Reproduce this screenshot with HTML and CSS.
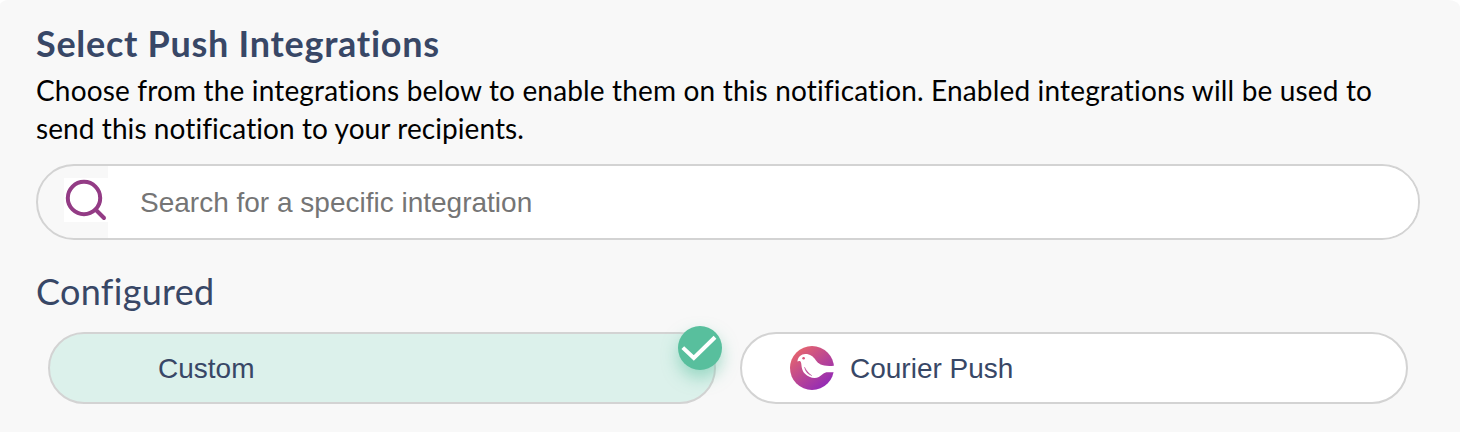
FILE: index.html
```html
<!DOCTYPE html>
<html lang="en">
<head>
<meta charset="utf-8">
<title>Push Integrations</title>
<link rel="stylesheet" href="styles.css">
</head>
<body>
<main class="panel">
  <h1 class="title">Select Push Integrations</h1>
  <p class="description"><span class="line-a">Choose from the integrations below to enable them on this notification. Enabled integrations will be used to</span><br><span class="line-b">send this notification to your recipients.</span></p>
  <label class="search">
    <span class="search-icon">
      <svg width="44" height="44" viewBox="0 0 44 44" fill="none" stroke="#933b85" stroke-width="4" stroke-linecap="round"><circle cx="20" cy="20" r="16.2"/><path d="M31.5 31.5L40 40"/></svg>
    </span>
    <input class="search-input" type="text" placeholder="Search for a specific integration">
  </label>
  <h2 class="subtitle">Configured</h2>
  <div class="options">
    <div class="option selected">
      <span class="logo"></span>
      <span class="name">Custom</span>
      <span class="check"><svg width="44" height="44" viewBox="0 0 44 44" fill="none" stroke="#fff" stroke-width="4"><path d="M4.8 21.6L15.8 32L37 11.2"/></svg></span>
    </div>
    <div class="option">
      <svg class="logo" viewBox="0 0 44 44">
        <defs><linearGradient id="brand" x1="0.15" y1="0.1" x2="0.8" y2="0.9"><stop offset="0" stop-color="#e5646e"/><stop offset="1" stop-color="#942bb5"/></linearGradient></defs>
        <circle cx="22" cy="22" r="22" fill="url(#brand)"/>
        <path fill="#fff" d="M7.4 15.4C8 11 11.3 8.1 15.2 8.1C20 8 23.2 10.6 25.8 14.2C29 18.5 33 20.8 45 19.6V26.2H38C33.5 26.2 32 29 28.8 31C24.8 33.2 18.5 31.6 15 27.8C11.4 24 11.8 20 11 16.4C10.4 14.6 8.8 14.6 7.4 15.4Z"/>
        <circle cx="13.6" cy="12.3" r="1.3" fill="#d95578"/>
        <path d="M14.4 21C15.4 25.6 18 28.6 22 29.8C18.8 27.4 16.6 24.8 14.4 21Z" fill="#b94491" stroke="#b94491" stroke-width=".3"/>
      </svg>
      <span class="name">Courier Push</span>
    </div>
  </div>
</main>
</body>
</html>
```
FILE: styles.css
```css
* { box-sizing: border-box; }
body { margin: 0; background: #fff; overflow: hidden; }
.panel {
  height: 432px;
  padding: 19px 40px 0 36px;
  background: #f8f8f8;
  border-radius: 9px 12px 0 0 / 5px 8px 0 0;
  font-family: Lato, "Open Sans", sans-serif;
}
.title, .subtitle, .description { margin: 0; white-space: nowrap; }
.title, .subtitle { height: 48px; line-height: 48px; font-size: 36px; color: #384766; }
.title { font-weight: 700; letter-spacing: 0.72px; }
.description { height: 76px; margin-top: 4px; font-size: 28px; line-height: 38px; color: #000; }
.line-a { letter-spacing: 0.16px; }
.line-b { letter-spacing: 0.08px; }
.search {
  display: flex;
  height: 76px;
  margin-top: 17px;
  overflow: hidden;
  border: 2px solid #d3d3d3;
  border-radius: 38px;
}
.search-icon { width: 70px; flex: none; padding: 12px 0 0 26px; }
.search-icon svg { display: block; background: #fff; }
.search-input {
  flex: 1;
  border: 0;
  outline: 0;
  padding: 2px 32px 0;
  background: #fff;
  font: 28px "Liberation Sans", Arial, sans-serif;
}
.search-input::placeholder { color: #757575; }
.subtitle { margin-top: 27px; font-weight: 400; letter-spacing: 0.3px; }
.options { display: grid; grid-template-columns: 668px 668px; gap: 24px; margin: 17px 0 0 12px; }
.option {
  position: relative;
  display: flex;
  align-items: center;
  gap: 16px;
  height: 72px;
  padding-left: 48px;
  border: 2px solid #d3d3d3;
  border-radius: 36px;
  background: #fff;
}
.selected { background: #dcf1eb; }
.logo { width: 44px; height: 44px; flex: none; }
.name { padding-top: 2px; font: 28px "Liberation Sans", Arial, sans-serif; color: #384766; }
.check {
  position: absolute;
  top: -8px;
  right: -8px;
  width: 44px;
  height: 44px;
  border-radius: 50%;
  background: #58bf9d;
  box-shadow: 0 8px 16px rgba(88, 191, 157, .5);
}
.check svg { display: block; }
```
